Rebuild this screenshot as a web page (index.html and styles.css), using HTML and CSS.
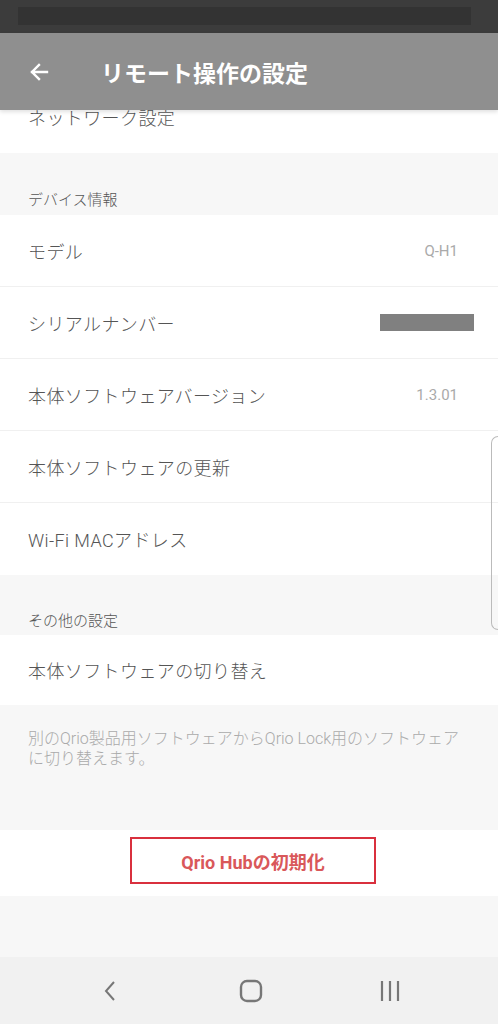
FILE: index.html
```html
<!DOCTYPE html>
<html lang="ja">
<head>
  <meta charset="UTF-8">
  <meta name="viewport" content="width=device-width, initial-scale=1.0">
  <title>リモート操作の設定</title>
  <link rel="stylesheet" href="styles.css">
</head>
<body>
  <div class="status-bar">
    <div class="status-mask"></div>
  </div>

  <header class="app-bar">
    <svg class="back" width="24" height="24" viewBox="0 0 24 24">
      <path d="M20 12H5M12 5l-7 7 7 7" fill="none" stroke="#fff" stroke-width="2.4" stroke-linecap="square"/>
    </svg>
    <h1>リモート操作の設定</h1>
  </header>

  <main class="content">
    <div class="row partial">ネットワーク設定</div>

    <div class="section-title first">デバイス情報</div>
    <div class="row">
      <span>モデル</span>
      <span class="value">Q-H1</span>
    </div>
    <div class="row">
      <span>シリアルナンバー</span>
      <span class="masked"></span>
    </div>
    <div class="row">
      <span>本体ソフトウェアバージョン</span>
      <span class="value">1.3.01</span>
    </div>
    <div class="row">
      <span>本体ソフトウェアの更新</span>
    </div>
    <div class="row last">
      <span>Wi-Fi MACアドレス</span>
    </div>

    <div class="section-title">その他の設定</div>
    <div class="row last short">
      <span>本体ソフトウェアの切り替え</span>
    </div>
    <p class="note">別のQrio製品用ソフトウェアからQrio Lock用のソフトウェアに切り替えます。</p>

    <div class="reset-wrap">
      <button class="reset">Qrio Hubの初期化</button>
    </div>
  </main>

  <nav class="nav-bar">
    <svg width="24" height="24" viewBox="0 0 24 24">
      <path d="M15 3L7 12l8 9" fill="none" stroke="#777" stroke-width="2"/>
    </svg>
    <svg width="24" height="24" viewBox="0 0 24 24">
      <rect x="2" y="2" width="20" height="20" rx="6" fill="none" stroke="#777" stroke-width="2.4"/>
    </svg>
    <svg width="24" height="24" viewBox="0 0 24 24">
      <path d="M4 2v20M12 2v20M20 2v20" fill="none" stroke="#777" stroke-width="2.2"/>
    </svg>
  </nav>

  <div class="edge-handle"></div>
</body>
</html>
```

FILE: styles.css
```css
body {
  margin: 0;
  width: 498px;
  height: 1024px;
  overflow: hidden;
  position: relative;
  font-family: Roboto, "Noto Sans CJK JP", sans-serif;
  background-color: #f7f7f7;
  color: #555;
}
.status-bar {
  height: 33px;
  background-color: #3c3c3c;
  padding: 7px 27px 0 18px;
  box-sizing: border-box;
}
.status-mask {
  height: 18px;
  background-color: #333;
}
.app-bar {
  position: relative;
  z-index: 2;
  height: 77px;
  background-color: #8f8f8f;
  display: flex;
  align-items: center;
  padding-left: 27px;
  box-shadow: 0 2px 4px rgba(0,0,0,0.12);
}
.back {
  display: block;
}
.app-bar h1 {
  margin: 0 0 0 50px;
  font-size: 23px;
  font-weight: bold;
  color: #fff;
}
.content {
  height: 847px;
}
.row {
  height: 72px;
  background-color: #fff;
  border-bottom: 1px solid #f0f0f0;
  box-sizing: border-box;
  display: flex;
  align-items: center;
  justify-content: space-between;
  padding: 0 40px 0 28px;
  font-size: 18px;
  font-weight: 300;
  letter-spacing: 0.4px;
}
/* scrolled row, its top is hidden under the app bar */
.row.partial {
  height: 43px;
  align-items: flex-start;
  line-height: 18px;
  border-bottom: none;
}
.row.last {
  border-bottom: none;
}
.row.short {
  height: 70px;
}
.value {
  font-size: 15px;
  font-weight: normal;
  color: #aaa;
  letter-spacing: 0;
}
.masked {
  width: 94px;
  height: 17px;
  background-color: #808080;
  margin-right: -16px;
}
.section-title {
  height: 60px;
  box-sizing: border-box;
  padding: 34px 0 0 28px;
  font-size: 15px;
  font-weight: 300;
  color: #555;
}
.section-title.first {
  height: 62px;
  padding-top: 35px;
}
.note {
  margin: 0;
  height: 125px;
  box-sizing: border-box;
  padding: 24px 30px 0 28px;
  font-size: 16px;
  font-weight: 300;
  line-height: 20px;
  color: #aaa;
}
.reset-wrap {
  height: 66px;
  background-color: #fff;
  display: flex;
  align-items: flex-start;
  padding: 7px 0 0 130px;
  box-sizing: border-box;
}
.reset {
  width: 246px;
  height: 47px;
  background-color: #fff;
  border: 2px solid #d9303e;
  color: #d9585a;
  font-family: inherit;
  font-size: 18px;
  font-weight: bold;
  padding: 0;
}
.nav-bar {
  height: 67px;
  background-color: #f1f1f1;
  display: flex;
  align-items: center;
  justify-content: space-between;
  padding: 0 96px 0 99px;
}
.edge-handle {
  position: absolute;
  top: 436px;
  right: 0;
  width: 6px;
  height: 192px;
  border: 1px solid #bbb;
  border-right: none;
  border-radius: 7px 0 0 7px;
}
```
